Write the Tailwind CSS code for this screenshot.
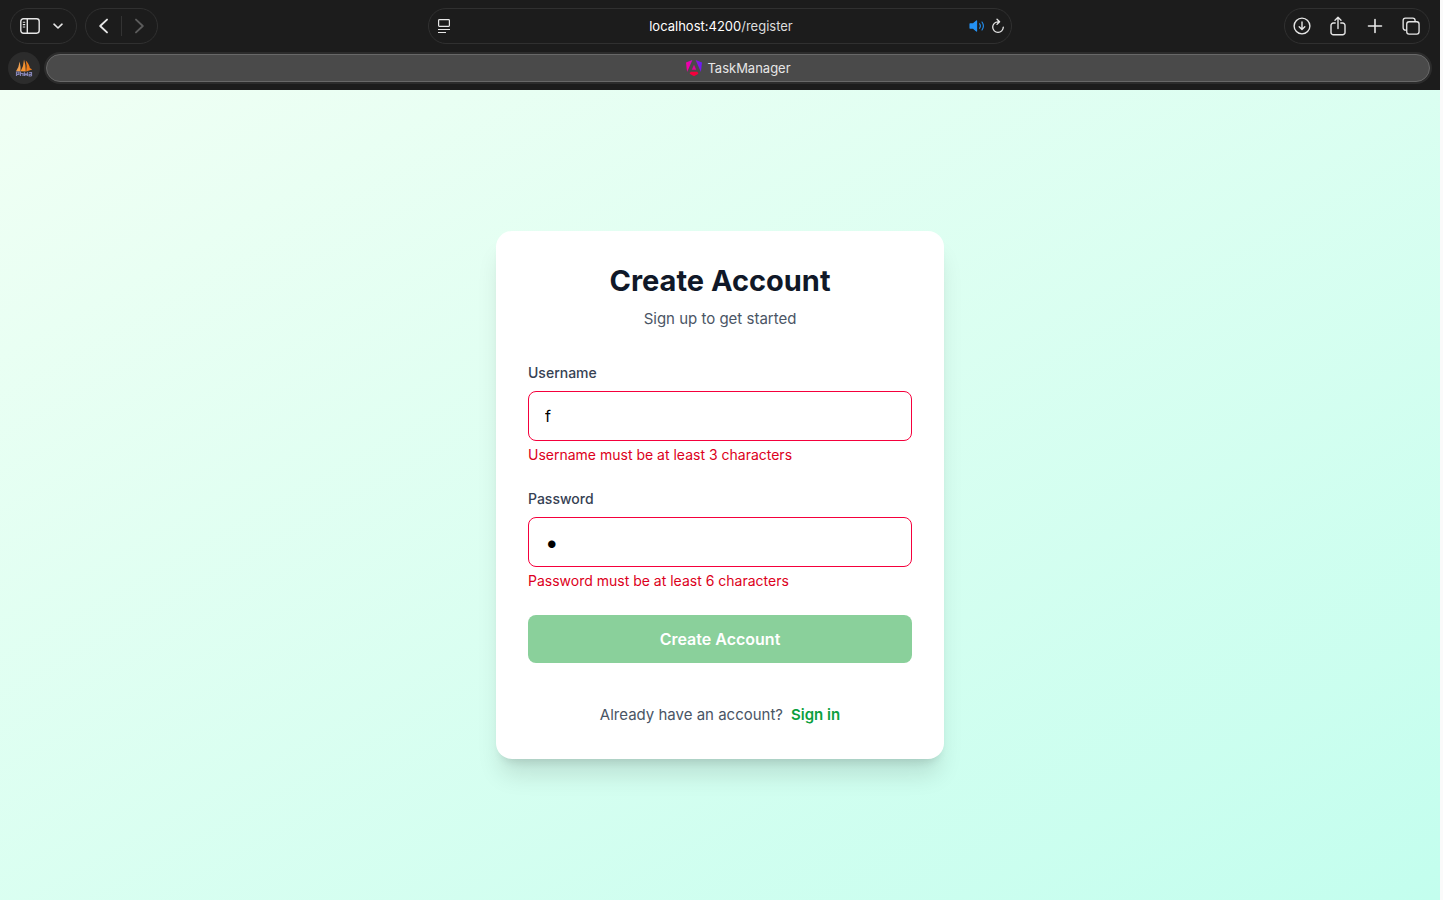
<!DOCTYPE html>
<html lang="en">
<head>
<meta charset="utf-8">
<meta name="viewport" content="width=device-width, initial-scale=1">
<title>TaskManager</title>
<script src="https://cdn.jsdelivr.net/npm/@tailwindcss/browser@4"></script>
</head>
<body class="flex min-h-screen flex-col bg-[#fafafa] pr-[3px] font-['Inter','Liberation_Sans',sans-serif]">

<!-- Browser chrome -->
<header class="flex h-[90px] flex-col bg-[#1c1c1c] text-[#e6e6e6]">
  <div class="grid grid-cols-[1fr_minmax(0,584px)_1fr] items-center px-[10px] pt-2">
    <div class="flex gap-2">
      <div class="flex h-9 w-[67px] items-center gap-3 rounded-full border border-[#303030] pl-[9px]">
        <button type="button" aria-label="Sidebar">
          <svg class="block" width="20" height="16" viewBox="0 0 20 16" fill="none" stroke="currentColor" stroke-width="1.4"><rect x="0.8" y="0.8" width="18.4" height="14.4" rx="2.6"/><path d="M7.3 1v14"/><path d="M2.8 4.2h2.4M2.8 6.6h2.4M2.8 9h2.4" stroke-width="1.1"/></svg>
        </button>
        <button type="button" aria-label="Tab groups">
          <svg class="block" width="12" height="8" viewBox="0 0 12 8" fill="none" stroke="currentColor" stroke-width="1.6" stroke-linecap="round" stroke-linejoin="round"><path d="M2 2.2l4 3.8 4-3.8"/></svg>
        </button>
      </div>
      <div class="flex h-9 w-[73px] items-center justify-between rounded-full border border-[#303030] px-3">
        <button type="button" aria-label="Back">
          <svg class="block" width="12" height="16" viewBox="0 0 12 16" fill="none" stroke="currentColor" stroke-width="1.9" stroke-linecap="round" stroke-linejoin="round"><path d="M9 1.6L2.2 8 9 14.4"/></svg>
        </button>
        <span class="h-5 w-px bg-[#333333]"></span>
        <button type="button" aria-label="Forward" class="text-[#5c5c5c]">
          <svg class="block" width="12" height="16" viewBox="0 0 12 16" fill="none" stroke="currentColor" stroke-width="1.9" stroke-linecap="round" stroke-linejoin="round"><path d="M3 1.6L9.8 8 3 14.4"/></svg>
        </button>
      </div>
    </div>

    <div class="grid h-9 grid-cols-[1fr_auto_1fr] items-center rounded-full border border-[#303030] pr-[6px] pl-2">
      <button type="button" aria-label="Page menu" class="justify-self-start">
        <svg class="block" width="14" height="16" viewBox="0 0 14 16" fill="none" stroke="currentColor" stroke-width="1.2"><rect x="1.6" y="1.6" width="10.8" height="6.8" rx="0.8"/><path d="M1 11.5h12M1 14.5h8"/></svg>
      </button>
      <p class="text-[13px] leading-5 text-white">localhost:4200<span class="text-[#dcdcdc]">/register</span></p>
      <div class="flex items-center gap-[6px] justify-self-end">
        <button type="button" aria-label="Mute tab" class="text-[#2492f5]">
          <svg class="block" width="16" height="14" viewBox="0 0 16 14" fill="none" stroke="currentColor" stroke-width="1.1" stroke-linecap="round"><path d="M1 4.9h3L7.600 1.900v10.200L4 9.100H1z" fill="currentColor" stroke-linejoin="round"/><path d="M10.600 4.800q1.500 2.200 0 4.400M13 3q2.800 4 0 8"/></svg>
        </button>
        <button type="button" aria-label="Reload">
          <svg class="block" width="14" height="16" viewBox="0 0 14 16" fill="none" stroke="currentColor" stroke-width="1.300" stroke-linecap="round" stroke-linejoin="round"><path d="M8.200 3.800H7a5.300 5.300 0 1 0 5.300 5.300M6 1.200l2.600 2.600L6 6.400"/></svg>
        </button>
      </div>
    </div>

    <div class="flex h-9 w-[146px] items-center justify-between justify-self-end rounded-full border border-[#303030] pr-2 pl-[7px]">
      <button type="button" aria-label="Downloads" class="flex size-5 items-center justify-center">
        <svg class="block" width="18" height="18" viewBox="0 0 18 18" fill="none" stroke="currentColor" stroke-width="1.4" stroke-linecap="round" stroke-linejoin="round"><circle cx="9" cy="9" r="7.9"/><path d="M9 5v7.4M6.2 9.8L9 12.6l2.8-2.8"/></svg>
      </button>
      <button type="button" aria-label="Share" class="flex size-5 items-center justify-center">
        <svg class="block" width="16" height="20" viewBox="0 0 16 20" fill="none" stroke="currentColor" stroke-width="1.4" stroke-linecap="round" stroke-linejoin="round"><path d="M5.2 7H3.4A2.4 2.4 0 0 0 1 9.4v7A2.4 2.4 0 0 0 3.4 18.8h9.2a2.4 2.4 0 0 0 2.4-2.4v-7A2.4 2.4 0 0 0 12.6 7h-1.8M8 12.5V1.300M5 4.200l3-3 3 3"/></svg>
      </button>
      <button type="button" aria-label="New tab" class="flex size-5 items-center justify-center">
        <svg class="block" width="16" height="16" viewBox="0 0 16 16" fill="none" stroke="currentColor" stroke-width="1.6" stroke-linecap="round"><path d="M8 1.5v13M1.5 8h13"/></svg>
      </button>
      <button type="button" aria-label="Tab overview" class="flex size-5 items-center justify-center">
        <svg class="block" width="18" height="18" viewBox="0 0 19 19" fill="none" stroke="currentColor" stroke-width="1.4" stroke-linejoin="round"><rect x="5" y="5" width="13" height="13" rx="2.4"/><path d="M5 13.8H3.6A2.4 2.4 0 0 1 1.2 11.4V3.6A2.4 2.4 0 0 1 3.6 1.2h7.8a2.4 2.4 0 0 1 2.4 2.4V5"/></svg>
      </button>
    </div>
  </div>

  <div class="flex items-center gap-1 px-2 pt-2">
    <button type="button" aria-label="phpMyAdmin" class="flex size-8 shrink-0 items-center justify-center rounded-full bg-[#2c2c2c]">
      <svg class="block" width="18" height="18" viewBox="0 0 18 18"><path d="M4.600 2.500Q4 8 1 12.200l4.500.3Q6 8 4.600 2.500z" fill="#f0a050"/><path d="M9 .5Q8.800 7 5.600 12.200l5.200.2Q11 6 9 .5z" fill="#f59331"/><path d="M10.800 1.500q4 4.500 4 7.500l2.400 1.500-6 2Q12.300 7 10.800 1.500z" fill="#ef7d1a"/><g fill="none" stroke="#8584b5" stroke-width="1.200"><path d="M1.500 17v-4h2.400v2.400H1.500M5.500 12.500V17M5.500 14.500H8V17M9.500 17v-3l1.500 2 1.500-2v3M16.500 17h-2.300v-1.700h2.300M14.200 13.500h2.300V17"/></g></svg>
    </button>
    <div class="flex-1 rounded-full bg-[#2c2c2c] p-[2px]">
      <div class="flex h-7 items-center justify-center gap-1 rounded-full border border-[#686868] bg-[#4a4a4a]">
        <svg class="block" width="18" height="18" viewBox="-1 -1 18 18" aria-hidden="true"><defs><linearGradient id="shield" gradientUnits="userSpaceOnUse" x1="1" y1="8" x2="15" y2="5"><stop offset="0" stop-color="#f500a0"/><stop offset=".4" stop-color="#d800c8"/><stop offset=".75" stop-color="#8b14e0"/><stop offset="1" stop-color="#6a1cf5"/></linearGradient></defs><g fill="url(#shield)"><path d="M0 2.600L6.400 0 1.100 12z"/><path d="M16 2.600L9.600 0l5.300 12z"/></g><path d="M8 4.800l2.200 5H5.800z" fill="#e4009c"/><path d="M4.600 11.800h6.800l1 2L8 16.300l-4.400-2.500z" fill="#f5003c"/></svg>
        <span class="text-[13px] leading-5">TaskManager</span>
      </div>
    </div>
  </div>
</header>

<main class="flex flex-1 items-center justify-center bg-linear-to-br from-[#f0fff4] to-[#c3feee] p-4">
  <div class="w-full max-w-md rounded-2xl bg-white p-8 shadow-[0_20px_25px_-5px_rgba(0,0,0,0.12),0_8px_10px_-6px_rgba(0,0,0,0.12)]">
    <div class="mb-8 text-center">
      <h1 class="mb-2 text-[29px] leading-9 font-bold text-[#101828]">Create Account</h1>
      <p class="text-[15px] leading-6 text-[#4a5565]">Sign up to get started</p>
    </div>
    <form class="flex flex-col gap-6">
      <div>
        <label for="username" class="mb-2 block text-sm leading-5 font-medium text-[#364153]">Username</label>
        <input id="username" type="text" value="f" class="block h-[50px] w-full rounded-lg border border-[#f5003c] px-4 text-base text-black outline-none">
        <p class="mt-1 text-sm leading-5 text-[#dc0020]">Username must be at least 3 characters</p>
      </div>
      <div>
        <label for="password" class="mb-2 block text-sm leading-5 font-medium text-[#364153]">Password</label>
        <input id="password" type="password" value="p" class="block h-[50px] w-full rounded-lg border border-[#f5003c] px-4 text-2xl text-black outline-none">
        <p class="mt-1 text-sm leading-5 text-[#dc0020]">Password must be at least 6 characters</p>
      </div>
      <button type="submit" disabled class="h-12 w-full rounded-lg bg-[#8ad09b] text-base leading-6 font-semibold text-white">Create Account</button>
    </form>
    <p class="mt-10 text-center text-[15px] leading-6 text-[#4a5565]">Already have an account?<a href="/login" class="ml-2 font-semibold text-[#0b9f3f]">Sign in</a></p>
  </div>
</main>
</body>
</html>
